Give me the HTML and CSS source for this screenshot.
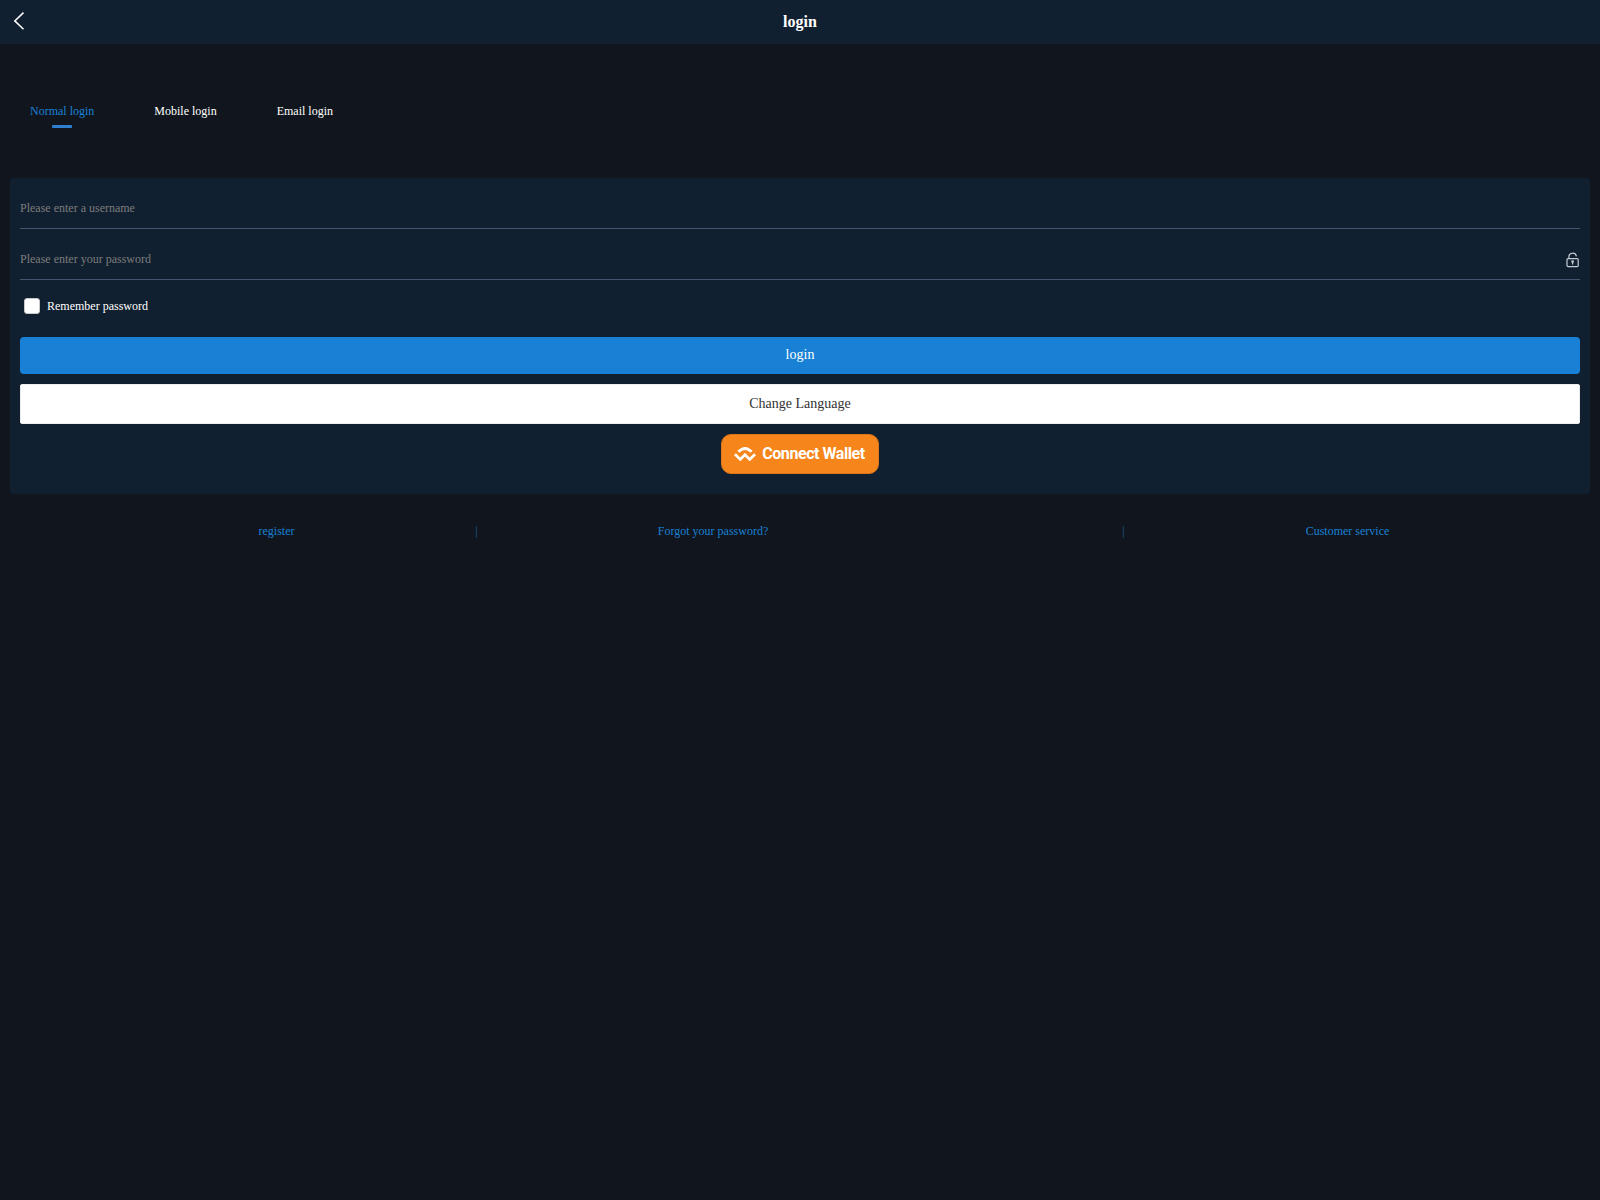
FILE: index.html
```html
<!DOCTYPE html>
<html lang="en">
<head>
    <meta charset="UTF-8">
    <meta name="viewport" content="width=device-width, initial-scale=1.0">
    <title>login</title>
    <link rel="stylesheet" href="styles.css">
</head>
<body>
    <header class="header">
        <a class="back" href="#" aria-label="Back">
            <svg width="12" height="18" viewBox="0 0 12 18"><path d="M10.5 0.6 L1.8 8.9 L10.5 17.2" fill="none" stroke="#fff" stroke-width="1.5"/></svg>
        </a>
        <h1>login</h1>
        <span></span>
    </header>

    <nav class="tabs">
        <a class="tab active" href="#">Normal login</a>
        <a class="tab" href="#">Mobile login</a>
        <a class="tab" href="#">Email login</a>
    </nav>

    <form class="card">
        <div class="field">
            <input type="text" placeholder="Please enter a username">
        </div>
        <div class="field">
            <input type="password" placeholder="Please enter your password">
            <svg class="lock" width="14" height="16" viewBox="0 0 14 16" fill="none" stroke="#c3ccd3" stroke-width="1.2">
                <rect x="1" y="6.6" width="11.2" height="8" rx="1"/>
                <path d="M2.9 6.5 V4.8 C2.9 0.4 9.6 -0.2 10.4 4.4"/>
                <circle cx="6.6" cy="9.6" r="0.8"/>
                <path d="M6.6 10 V12.6"/>
            </svg>
        </div>
        <label class="remember">
            <input type="checkbox">
            <span>Remember password</span>
        </label>
        <button type="button" class="btn btn-login">login</button>
        <button type="button" class="btn btn-language">Change Language</button>
        <button type="button" class="btn-wallet">
            <svg width="22" height="15" viewBox="0 0 22 15" fill="none" stroke="#fff" stroke-width="2.8">
                <path d="M4.4 4.8 Q11 -1.8 17.6 4.8"/>
                <path d="M0.9 7.2 L6.3 12.4 L11 7.8 L15.7 12.4 L21.1 7.2"/>
            </svg>
            <span>Connect Wallet</span>
        </button>
    </form>

    <footer class="links">
        <a class="register" href="#">register</a>
        <span class="line">|</span>
        <a class="forgot" href="#">Forgot your password?</a>
        <span class="line">|</span>
        <a href="#">Customer service</a>
    </footer>
</body>
</html>
```

FILE: styles.css
```css
* {
    box-sizing: border-box;
}

body {
    margin: 0;
    min-height: 100vh;
    background-color: #11161e;
    font-family: "Liberation Serif", "Times New Roman", serif;
    font-size: 12px;
    color: #fff;
}

a {
    color: inherit;
    text-decoration: none;
}

.header {
    display: grid;
    grid-template-columns: 100px 1fr 100px;
    align-items: center;
    height: 44px;
    background-color: #112030;
}

.header h1 {
    margin: 0;
    font-size: 16px;
    line-height: 44px;
    text-align: center;
}

.back {
    display: flex;
    padding: 0 0 3px 13px;
}

.tabs {
    display: flex;
    gap: 60px;
    height: 134px;
    padding: 57px 30px 0;
}

.tab {
    line-height: 20px;
}

.tab.active {
    color: #1981d5;
}

.tab.active::after {
    content: "";
    display: block;
    width: 20px;
    height: 3px;
    margin: 4px auto 0;
    border-radius: 1px;
    background-color: #2f7fd0;
}

.card {
    height: 316px;
    margin: 0 10px;
    padding: 10px;
    border-radius: 4px;
    background-color: #112030;
}

.field {
    display: flex;
    align-items: center;
    height: 41px;
    margin-bottom: 10px;
    border-bottom: 1px solid #445570;
}

.field input {
    flex: 1;
    height: 40px;
    padding: 0;
    border: none;
    outline: none;
    background: none;
    color: #fff;
    font-family: inherit;
    font-size: 12px;
}

.field input::placeholder {
    color: #7c7c7c;
}

.lock {
    margin-top: 1px;
}

.remember {
    display: flex;
    align-items: center;
    height: 32px;
    margin-bottom: 15px;
}

.remember input {
    appearance: none;
    width: 16px;
    height: 16px;
    margin: 0 7px 0 4px;
    border: 1px solid #c8c9cc;
    border-radius: 3px;
    background-color: #fff;
}

.btn {
    display: block;
    width: 100%;
    padding: 0;
    border: none;
    border-radius: 4px;
    font-family: inherit;
    font-size: 14px;
}

.btn-login {
    height: 37px;
    padding-bottom: 2px;
    background-color: #1981d5;
    color: #fff;
}

.btn-language {
    height: 40px;
    margin-top: 10px;
    border: 1px solid #ebedf0;
    border-radius: 2px;
    background-color: #fff;
    color: #323233;
}

.btn-wallet {
    display: flex;
    align-items: center;
    justify-content: center;
    gap: 6px;
    width: 158px;
    height: 40px;
    margin: 10px auto 0;
    padding: 0 1px 0 0;
    border: 1px solid #db761b;
    border-radius: 10px;
    background-color: #f6851b;
    color: #fff;
    font-family: Roboto, sans-serif;
    font-size: 16px;
    font-weight: 700;
    letter-spacing: -0.44px;
}

.btn-wallet span {
    padding-bottom: 2px;
}

.links {
    display: grid;
    grid-template-columns: 399px 3px 644px 3px 1fr;
    padding: 27px 30px 0 76px;
    line-height: 20px;
    color: #1981d5;
    text-align: center;
}

.links .register {
    padding-left: 2px;
}

.links .forgot {
    padding-right: 174px;
}

.links .line {
    color: #1c5f9a;
}
```
